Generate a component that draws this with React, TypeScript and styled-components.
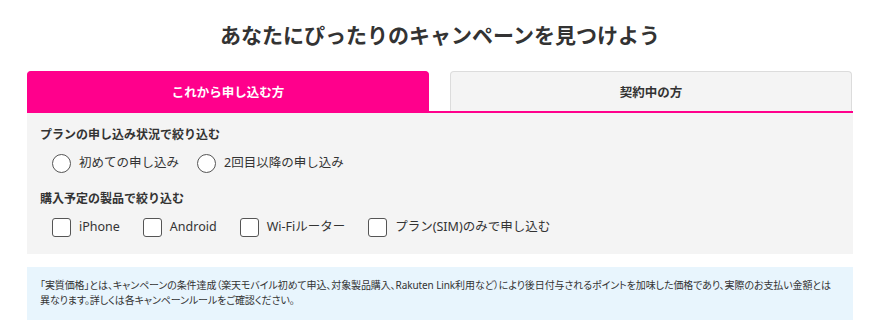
import React, { useState } from 'react';
import styled, { createGlobalStyle } from 'styled-components';

const GlobalStyle = createGlobalStyle`
  body {
    margin: 0;
    background: #fff;
    font-family: "Noto Sans", "Noto Sans CJK JP", sans-serif;
    color: #333;
  }
`;

const Page = styled.div`
  width: 826px;
  margin-left: 27px;
  padding-top: 18px;
`;

const Title = styled.h1`
  margin: 0 0 19px;
  height: 34px;
  line-height: 34px;
  text-align: center;
  font-size: 21px;
  font-weight: 700;
  color: #333;
`;

const Tabs = styled.div`
  display: grid;
  grid-template-columns: 402px 402px;
  column-gap: 21px;
  border-bottom: 2px solid #ff008c;
`;

const Tab = styled.button<{ $active?: boolean }>`
  height: 40px;
  border: 1px solid ${(p) => (p.$active ? '#ff008c' : '#dcdcdc')};
  border-bottom: none;
  border-radius: 4px 4px 0 0;
  background: ${(p) => (p.$active ? '#ff008c' : '#f4f4f4')};
  color: ${(p) => (p.$active ? '#fff' : '#333')};
  font-family: inherit;
  font-size: 12.5px;
  font-weight: 700;
  cursor: pointer;
  padding: 0;
`;

const Panel = styled.div`
  background: #f4f4f4;
  padding: 12px 13px 11px;
  height: 141px;
  box-sizing: border-box;
`;

const Heading = styled.div`
  font-size: 12px;
  font-weight: 700;
  line-height: 20px;
  color: #333;
`;

const Options = styled.div<{ $space?: number; $gap: number }>`
  display: flex;
  gap: ${(p) => p.$gap}px;
  padding: 8px 0 0 12px;
  margin-bottom: ${(p) => p.$space ?? 0}px;
`;

const Option = styled.label`
  display: flex;
  align-items: center;
  gap: 8px;
  font-size: 12.5px;
  line-height: 20px;
  color: #333;
  cursor: pointer;
`;

const Radio = styled.span<{ $on?: boolean }>`
  width: 17px;
  height: 17px;
  border-radius: 50%;
  border: 1px solid #555;
  background: #fff;
  display: inline-flex;
  align-items: center;
  justify-content: center;
  &::after {
    content: '';
    width: 9px;
    height: 9px;
    border-radius: 50%;
    background: ${(p) => (p.$on ? '#ff008c' : 'transparent')};
  }
`;

const Box = styled.span<{ $on?: boolean }>`
  width: 17px;
  height: 17px;
  border-radius: 3px;
  border: 1px solid #555;
  background: ${(p) => (p.$on ? '#ff008c' : '#fff')};
`;

const Note = styled.div`
  margin-top: 13px;
  background: #e8f5fd;
  height: 53px;
  box-sizing: border-box;
  padding: 11px 13px;
  font-size: 10px;
  line-height: 15px;
  color: #333;
  font-feature-settings: "palt";
  letter-spacing: -0.1px;
`;

const plans = ['初めての申し込み', '2回目以降の申し込み'];
const products = ['iPhone', 'Android', 'Wi-Fiルーター', 'プラン(SIM)のみで申し込む'];

export default function App() {
  const [tab, setTab] = useState(0);
  const [plan, setPlan] = useState<number | null>(null);
  const [picked, setPicked] = useState<string[]>([]);

  const toggle = (p: string) =>
    setPicked((cur) => (cur.includes(p) ? cur.filter((x) => x !== p) : [...cur, p]));

  return (
    <>
      <GlobalStyle />
      <Page>
        <Title>あなたにぴったりのキャンペーンを見つけよう</Title>
        <Tabs>
          <Tab $active={tab === 0} onClick={() => setTab(0)}>これから申し込む方</Tab>
          <Tab $active={tab === 1} onClick={() => setTab(1)}>契約中の方</Tab>
        </Tabs>
        <Panel>
          <Heading>プランの申し込み状況で絞り込む</Heading>
          <Options $space={16} $gap={18}>
            {plans.map((p, i) => (
              <Option key={p} onClick={() => setPlan(i)}>
                <Radio $on={plan === i} />
                {p}
              </Option>
            ))}
          </Options>
          <Heading>購入予定の製品で絞り込む</Heading>
          <Options $gap={23}>
            {products.map((p) => (
              <Option key={p} onClick={() => toggle(p)}>
                <Box $on={picked.includes(p)} />
                {p}
              </Option>
            ))}
          </Options>
        </Panel>
        <Note>
          「実質価格」とは、キャンペーンの条件達成（楽天モバイル初めて申込、対象製品購入、Rakuten Link利用など）により後日付与されるポイントを加味した価格であり、実際のお支払い金額とは異なります。詳しくは各キャンペーンルールをご確認ください。
        </Note>
      </Page>
    </>
  );
}
